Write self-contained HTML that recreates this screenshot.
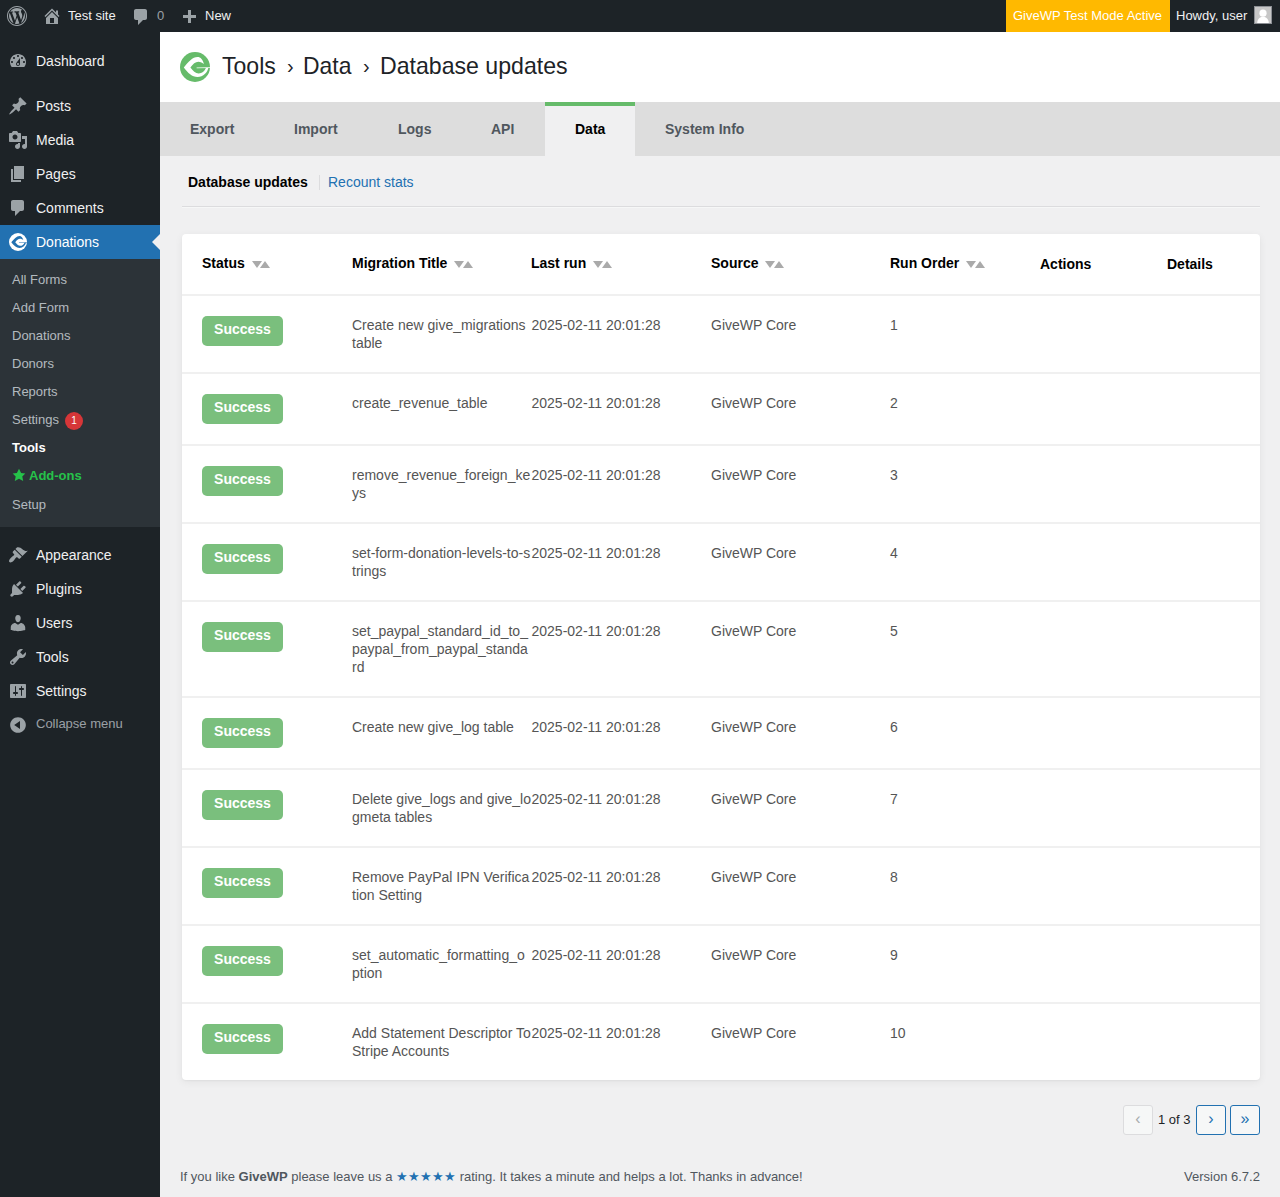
<!DOCTYPE html>
<html><head><meta charset="utf-8">
<style>
*{box-sizing:border-box;margin:0;padding:0}
html,body{width:1280px;height:1197px;overflow:hidden}
body{font-family:"Liberation Sans",sans-serif;background:#f0f0f1;color:#3c434a;font-size:13px;position:relative}
.a{position:absolute;white-space:nowrap}
#wpadminbar{position:absolute;left:0;top:0;width:1280px;height:32px;background:#1d2327;color:#f0f0f1;font-size:13px;line-height:15px}
#wpadminbar .t{position:absolute;top:8px;white-space:nowrap}
#wpadminbar svg{position:absolute;fill:rgba(240,246,252,.6)}
#adminmenu{position:absolute;left:0;top:32px;width:160px;height:1165px;background:#1d2327}
.mi{position:absolute;left:0;width:160px;height:34px;font-size:14px;line-height:16px;color:#f0f0f1}
.mi .tx{position:absolute;left:36px;top:9px;white-space:nowrap}
.mi svg{position:absolute;left:8px;top:7px;width:20px;height:20px;fill:rgba(240,246,252,.6)}
.mi.act{background:#2271b1;color:#fff}
.mi.coll{color:rgba(240,246,252,.6);font-size:13px;line-height:15px}
.mi.coll .tx{top:8px}
.arrow{position:absolute;right:0;top:9px;width:0;height:0;border:8px solid transparent;border-right-color:#f0f0f1}
.sub{position:absolute;left:0;top:227px;width:160px;height:268px;background:#2c3338}
.si{position:absolute;left:12px;font-size:13px;line-height:15px;color:rgba(240,246,252,.7);white-space:nowrap}
.si.cur{color:#fff;font-weight:bold}
.si.addons{color:#26c24a;font-weight:bold}
.si .star{position:absolute;left:-17.5px;top:0px;width:14px;height:14px;fill:#26c24a}
.bub{position:absolute;left:53px;top:0px;width:18px;height:18px;border-radius:9px;background:#d63638;color:#fff;font-size:10px;line-height:17px;text-align:center}
.hdr{position:absolute;left:160px;top:32px;width:1120px;height:70px;background:#fff}
.crumb{position:absolute;left:222px;top:52px;font-size:24px;line-height:27px;color:#1d2327;white-space:nowrap}
.crumb .sep{display:inline-block;margin:0 0px;font-size:24px}
.tabs{position:absolute;left:160px;top:102px;width:1120px;height:54px;background:#dddddd}
.tab{position:absolute;top:121px;font-size:14px;line-height:16px;font-weight:bold;color:#50575e;white-space:nowrap}
.tabact{position:absolute;left:545px;top:102px;width:90px;height:54px;background:#f0f0f1;border-top:4px solid #66bb6a}
.subnav{position:absolute;top:174px;font-size:14px;line-height:16px;white-space:nowrap}
.hr{position:absolute;left:182px;top:206px;width:1078px;height:2px;border-top:1px solid #dcdcde;border-bottom:1px solid #f6f7f7}
.card{position:absolute;left:182px;top:234px;width:1078px;height:846px;background:#fff;border-radius:4px;box-shadow:0 1px 2px rgba(0,0,0,.04),0 2px 8px rgba(0,0,0,.06)}
.th{position:absolute;font-size:14px;font-weight:bold;color:#000;line-height:16px;white-space:nowrap}
.srt{position:relative;display:inline-block;width:26px;height:10px;margin-left:0px}
.srt i{position:absolute;top:3px;width:0;height:0;border-left:5px solid transparent;border-right:5px solid transparent}
.srt i.dn{left:7px;border-top:7px solid #aaa}
.srt i.up{left:15.5px;border-bottom:7px solid #aaa}
.rb{position:absolute;left:182px;width:1078px;height:2px;background:#f0f0f0}
.td{position:absolute;font-size:14px;color:#555;line-height:18px;white-space:nowrap}
.badge{position:absolute;left:202px;width:81px;height:30px;border-radius:5px;background:#7abf7d;color:#fff;font-weight:bold;font-size:14px;line-height:16px;padding-top:5px;text-align:center}
.pg{position:absolute;top:1105px;width:30px;height:30px;border:1px solid #2271b1;border-radius:3px;background:#f6f7f7;color:#2271b1;font-size:16px;line-height:26px;text-align:center}
.pg.dis{border-color:#dcdcde;color:#a7aaad}
</style></head><body>
<div id="wpadminbar">
  <svg viewBox="0 0 20 20" style="left:7px;top:6px;width:20px;height:20px"><path fill-rule="evenodd" d="M20 10c0-5.52-4.48-10-10-10S0 4.48 0 10s4.48 10 10 10 10-4.48 10-10zM10 1.01c4.97 0 8.99 4.02 8.99 8.99s-4.02 8.99-8.99 8.99S1.01 14.97 1.01 10 5.03 1.01 10 1.01zM8.01 14.82L4.96 6.61c.49-.03 1.05-.08 1.05-.08.43-.05.38-1.01-.06-.99 0 0-1.29.1-2.13.1-.15 0-.33 0-.52-.01 1.44-2.17 3.9-3.6 6.7-3.6 2.09 0 3.99.79 5.41 2.09-.6-.08-1.45.35-1.45 1.42 0 .66.38 1.220.79 1.88.31.54.5 1.22.5 2.21 0 1.34-1.27 4.48-1.27 4.48l-2.71-7.5c.48-.03.75-.16.75-.16.43-.05.38-1.1-.05-1.08 0 0-1.3.11-2.14.11-.78 0-2.11-.11-2.11-.11-.43-.02-.48 1.06-.05 1.08l.84.08 1.12 3.04zm6.02 2.15L16.64 10s.67-1.69.39-3.81c.63 1.14.94 2.42.94 3.81 0 2.96-1.56 5.58-3.94 6.97zM2.68 6.77L6.5 17.25c-2.67-1.3-4.47-4.08-4.47-7.25 0-1.16.2-2.230.65-3.23zm7.45 4.53l2.29 6.25c-.75.27-1.57.42-2.42.42-.72 0-1.41-.11-2.06-.3z"/></svg>
  <svg viewBox="0 0 20 20" style="left:42px;top:6px;width:20px;height:20px"><path fill-rule="evenodd" d="M16 8.5l1.53 1.53-1.06 1.06L10 4.62l-6.47 6.47-1.06-1.06L10 2.5l4 4v-2h2v4zm-6-2.46l6 5.99V18H4v-5.97zM12 17v-5H8v5h4z"/></svg>
  <div class="t" style="left:68px">Test site</div>
  <svg viewBox="0 0 20 20" style="left:131px;top:7px;width:20px;height:20px"><path d="M5 2h9c1.1 0 2 .9 2 2v7c0 1.1-.9 2-2 2h-2l-5 5v-5H5c-1.1 0-2-.9-2-2V4c0-1.1.9-2 2-2z"/></svg>
  <div class="t" style="left:157px;color:rgba(240,246,252,.6)">0</div>
  <svg viewBox="0 0 20 20" style="left:179px;top:8px;width:20px;height:20px"><path d="M17 7v3h-5v5H9v-5H4V7h5V2h3v5h5z"/></svg>
  <div class="t" style="left:205px">New</div>
  <div style="position:absolute;left:1006px;top:0;width:164px;height:32px;background:#ffb900"></div>
  <div class="t" style="left:1013px;color:#fff">GiveWP Test Mode Active</div>
  <div class="t" style="left:1176px">Howdy, user</div>
  <div style="position:absolute;left:1254px;top:6px;width:18px;height:18px;border:1px solid #8c8f94;background:#c7c7c7;overflow:hidden">
    <svg viewBox="0 0 16 16" style="position:absolute;left:0;top:0;width:16px;height:16px;fill:#fff"><circle cx="8" cy="6.2" r="3.6"/><path d="M2.2 16c0-3.6 2.6-6.2 5.8-6.2s5.8 2.6 5.8 6.2z"/></svg>
  </div>
</div>
<div id="adminmenu">
<div class="mi" style="top:12px"><svg viewBox="0 0 20 20"><path fill-rule="evenodd" d="M3.76 16h12.48c1.1-1.37 1.76-3.11 1.76-5 0-4.42-3.58-8-8-8s-8 3.58-8 8c0 1.89.66 3.63 1.76 5zM10 4c.55 0 1 .45 1 1s-.45 1-1 1-1-.45-1-1 .45-1 1-1zM6 6c.55 0 1 .45 1 1s-.45 1-1 1-1-.45-1-1 .45-1 1-1zm8 0c.55 0 1 .45 1 1s-.45 1-1 1-1-.45-1-1 .45-1 1-1zm-5.37 5.55L12 7v6c0 1.1-.9 2-2 2s-2-.9-2-2c0-.57.24-1.08.63-1.45zM4 10c.55 0 1 .45 1 1s-.45 1-1 1-1-.45-1-1 .45-1 1-1zm12 0c.55 0 1 .45 1 1s-.45 1-1 1-1-.45-1-1 .45-1 1-1zm-5 3c0-.55-.45-1-1-1s-1 .45-1 1 .45 1 1 1 1-.45 1-1z"/></svg><span class="tx">Dashboard</span></div>
<div class="mi" style="top:57px"><svg viewBox="0 0 20 20"><path d="M10.44 3.02l1.82-1.82 6.36 6.35-1.83 1.82c-1.05-.68-2.48-.57-3.41.36l-.75.75c-.92.93-1.04 2.35-.35 3.41l-1.83 1.82-2.41-2.41-2.8 2.79c-.42.42-3.38 2.71-3.8 2.29s1.86-3.39 2.28-3.81l2.79-2.79L4.1 9.36l1.83-1.82c1.05.69 2.48.57 3.4-.36l.75-.75c.93-.92 1.05-2.35.36-3.41z"/></svg><span class="tx">Posts</span></div>
<div class="mi" style="top:91px"><svg viewBox="0 0 20 20"><path fill-rule="evenodd" d="M13 11V4c0-.55-.45-1-1-1h-1.67L9 1H5L3.67 3H2c-.55 0-1 .45-1 1v7c0 .55.45 1 1 1h10c.55 0 1-.45 1-1zM7 4.5c1.38 0 2.5 1.120 2.5 2.5S8.380 9.5 7 9.5 4.5 8.38 4.5 7 5.62 4.5 7 4.5z"/><path d="M14 6h5v10.5c0 1.38-1.12 2.5-2.5 2.5S14 17.88 14 16.5s1.12-2.5 2.5-2.5c.17 0 .34.02.5.05V9h-3V6zm-4 8.05V13h2v3.5c0 1.38-1.12 2.5-2.5 2.5S7 17.88 7 16.5 8.12 14 9.5 14c.17 0 .34.02.5.05z"/></svg><span class="tx">Media</span></div>
<div class="mi" style="top:125px"><svg viewBox="0 0 20 20"><path d="M6 15V2h10v13H6zm-1 1h8v2H3V5h2v11z"/></svg><span class="tx">Pages</span></div>
<div class="mi" style="top:159px"><svg viewBox="0 0 20 20"><path d="M5 2h9c1.1 0 2 .9 2 2v7c0 1.1-.9 2-2 2h-2l-5 5v-5H5c-1.1 0-2-.9-2-2V4c0-1.1.9-2 2-2z"/></svg><span class="tx">Comments</span></div>
<div class="mi act" style="top:193px"><svg viewBox="0 0 30 30" style="left:9px;top:8px;width:18px;height:18px"><circle cx="15" cy="15" r="15" fill="#fff"/><g fill="#2271b1"><path d="M23.9 12C23 7.6 20.6 4.9 17.5 4.9C12.6 4.9 8.2 9.8 3.8 15.4C8 21 12 24.9 17.5 24.9C23.4 24.9 27.5 20.2 28.3 15.9L25.9 16.1C24.6 19.6 21.6 21.5 18.6 21.4C15.6 21.3 12.8 18.6 10.4 15.4C12.8 12.1 15.5 9.7 18.3 9.7C20.6 9.7 22.5 10.8 23.9 12Z"/><path d="M16.6 15.6L30.5 15.2L30.5 16.1L16.6 16.3Z"/></g></svg><span class="tx">Donations</span><div class="arrow"></div></div>
<div class="sub"><div class="si" style="top:13px">All Forms</div><div class="si" style="top:41px">Add Form</div><div class="si" style="top:69px">Donations</div><div class="si" style="top:97px">Donors</div><div class="si" style="top:125px">Reports</div><div class="si" style="top:153px">Settings<span class="bub">1</span></div><div class="si cur" style="top:181px">Tools</div><div class="si addons" style="top:209px;left:29px"><svg class="star" viewBox="0 0 20 20"><path d="M10 1l3 6 6 .75-4.3 4.5L16 18.5 10 15.25 4 18.5l1.3-6.25L1 7.75 7 7z"/></svg>Add-ons</div><div class="si" style="top:238px">Setup</div></div>
<div class="mi" style="top:506px"><svg viewBox="0 0 20 20"><path d="M14.48 11.06L7.41 3.99l1.5-1.5c.5-.56 2.3-.47 3.51.32 1.21.8 1.43 1.28 2.91 2.1 1.18.64 2.45 1.26 4.45.85zm-.71.71L6.7 4.7 4.93 6.47c-.39.39-.39 1.02 0 1.41l1.06 1.06c.39.39.39 1.03 0 1.42-.6.6-1.43 1.11-2.21 1.69-.35.26-.7.53-1.01.84C1.43 14.23.4 16.08 1.4 17.07c.99 1 2.84-.03 4.180-1.36.31-.31.58-.66.85-1.020.57-.78 1.08-1.61 1.69-2.21.39-.39 1.02-.39 1.41 0l1.06 1.06c.39.39 1.02.39 1.41 0z"/></svg><span class="tx">Appearance</span></div>
<div class="mi" style="top:540px"><svg viewBox="0 0 20 20"><path d="M13.11 4.36L9.87 7.6 8 5.73l3.24-3.24c.35-.34 1.05-.2 1.56.32.52.51.66 1.21.31 1.55zm-8 1.77l.91-1.12 9.01 9.01-1.19.84c-.71.71-2.63 1.16-3.82 1.16H6.14L4.9 17.26c-.59.59-1.54.59-2.12 0-.59-.58-.59-1.53 0-2.12l1.24-1.24v-3.88c0-1.13.4-3.19 1.090-3.89zm7.26 3.97l3.24-3.24c.34-.35 1.04-.21 1.55.31.52.51.66 1.21.31 1.55l-3.24 3.25z"/></svg><span class="tx">Plugins</span></div>
<div class="mi" style="top:574px"><svg viewBox="0 0 20 20"><path d="M10 9.25c-2.27 0-2.73-3.44-2.73-3.44C7 4.02 7.82 2 9.97 2c2.16 0 2.98 2.02 2.71 3.81 0 0-.41 3.44-2.68 3.44zm0 2.57L12.72 10c2.39 0 4.52 2.33 4.52 4.53v2.49s-3.65 1.13-7.24 1.13c-3.65 0-7.24-1.13-7.24-1.13v-2.49c0-2.25 1.94-4.48 4.47-4.48z"/></svg><span class="tx">Users</span></div>
<div class="mi" style="top:608px"><svg viewBox="0 0 20 20"><path fill-rule="evenodd" d="M16.68 9.77c-1.34 1.34-3.3 1.67-4.95.99l-5.41 6.52c-.99.99-2.59.99-3.58 0s-.99-2.59 0-3.57l6.52-5.42c-.68-1.65-.35-3.61.99-4.95 1.28-1.28 3.12-1.62 4.72-1.06l-2.89 2.89 2.82 2.82 2.86-2.87c.53 1.58.18 3.39-1.08 4.65zM3.81 16.21c.4.39 1.04.39 1.43 0 .4-.4.4-1.04 0-1.430-.39-.4-1.03-.4-1.43 0-.39.39-.39 1.03 0 1.43z"/></svg><span class="tx">Tools</span></div>
<div class="mi" style="top:642px"><svg viewBox="0 0 20 20"><path fill-rule="evenodd" d="M18 16V4c0-.55-.45-1-1-1H3c-.55 0-1 .45-1 1v12c0 .55.45 1 1 1h14c.55 0 1-.45 1-1zM8 11h1c.55 0 1 .45 1 1s-.45 1-1 1H8v1.5c0 .28-.22.5-.5.5s-.5-.22-.5-.5V13H6c-.55 0-1-.45-1-1s.45-1 1-1h1V5.5c0-.28.22-.5.5-.5s.5.22.5.5V11zm5-2h-1c-.55 0-1-.45-1-1s.45-1 1-1h1V5.5c0-.28.22-.5.5-.5s.5.22.5.5V7h1c.55 0 1 .45 1 1s-.45 1-1 1h-1v5.5c0 .28-.22.5-.5.5s-.5-.22-.5-.5V9z"/></svg><span class="tx">Settings</span></div>
<div class="mi coll" style="top:676px"><svg viewBox="0 0 20 20"><path fill-rule="evenodd" d="M10 2.16c4.33 0 7.84 3.51 7.84 7.84s-3.51 7.84-7.84 7.84S2.16 14.33 2.16 10 5.71 2.16 10 2.16zm2 11.72V6.12L6.18 9.97z"/></svg><span class="tx">Collapse menu</span></div>
</div>
<div class="hdr"></div>
<svg viewBox="0 0 30 30" style="position:absolute;left:180px;top:52px;width:30px;height:30px;fill:#66bb6a"><circle cx="15" cy="15" r="15" fill="#66bb6a"/><g fill="#fff"><path d="M23.9 12C23 7.6 20.6 4.9 17.5 4.9C12.6 4.9 8.2 9.8 3.8 15.4C8 21 12 24.9 17.5 24.9C23.4 24.9 27.5 20.2 28.3 15.9L25.9 16.1C24.6 19.6 21.6 21.5 18.6 21.4C15.6 21.3 12.8 18.6 10.4 15.4C12.8 12.1 15.5 9.7 18.3 9.7C20.6 9.7 22.5 10.8 23.9 12Z"/><path d="M16.6 15.6L30.5 15.2L30.5 16.1L16.6 16.3Z"/></g></svg>
<div class="crumb" style="left:222px;transform:scaleX(.96);transform-origin:0 0">Tools</div>
<div class="crumb" style="left:287px;top:55px;font-size:20px;line-height:23px">›</div>
<div class="crumb" style="left:303px;transform:scaleX(.955);transform-origin:0 0">Data</div>
<div class="crumb" style="left:363px;top:55px;font-size:20px;line-height:23px">›</div>
<div class="crumb" style="left:380px;transform:scaleX(.963);transform-origin:0 0">Database updates</div>
<div class="tabs"></div>
<div class="tabact"></div>
<div class="tab" style="left:190px">Export</div>
<div class="tab" style="left:294px">Import</div>
<div class="tab" style="left:398px">Logs</div>
<div class="tab" style="left:491px">API</div>
<div class="tab" style="left:575px;color:#000">Data</div>
<div class="tab" style="left:665px">System Info</div>
<div class="subnav" style="left:188px;font-weight:bold;color:#000">Database updates</div>
<div style="position:absolute;left:319px;top:175px;width:1px;height:15px;background:#dcdcde"></div>
<div class="subnav" style="left:328px;color:#2271b1">Recount stats</div>
<div class="hr"></div>
<div class="card"></div>
<div class="th" style="left:202px;top:255px">Status<span class=srt><i class=dn></i><i class=up></i></span></div>
<div class="th" style="left:352px;top:255px">Migration Title<span class=srt><i class=dn></i><i class=up></i></span></div>
<div class="th" style="left:531px;top:255px">Last run<span class=srt><i class=dn></i><i class=up></i></span></div>
<div class="th" style="left:711px;top:255px">Source<span class=srt><i class=dn></i><i class=up></i></span></div>
<div class="th" style="left:890px;top:255px">Run Order<span class=srt><i class=dn></i><i class=up></i></span></div>
<div class="th" style="left:1040px;top:256px">Actions</div>
<div class="th" style="left:1167px;top:256px">Details</div>
<div class="rb" style="top:294px"></div>
<div class="badge" style="top:316px">Success</div>
<div class="td" style="left:352px;top:316px">Create new give_migrations<br>table</div>
<div class="td" style="left:531.5px;top:316px">2025-02-11 20:01:28</div>
<div class="td" style="left:711px;top:316px">GiveWP Core</div>
<div class="td" style="left:890px;top:316px">1</div>
<div class="rb" style="top:372px"></div>
<div class="badge" style="top:394px">Success</div>
<div class="td" style="left:352px;top:394px">create_revenue_table</div>
<div class="td" style="left:531.5px;top:394px">2025-02-11 20:01:28</div>
<div class="td" style="left:711px;top:394px">GiveWP Core</div>
<div class="td" style="left:890px;top:394px">2</div>
<div class="rb" style="top:444px"></div>
<div class="badge" style="top:466px">Success</div>
<div class="td" style="left:352px;top:466px">remove_revenue_foreign_ke<br>ys</div>
<div class="td" style="left:531.5px;top:466px">2025-02-11 20:01:28</div>
<div class="td" style="left:711px;top:466px">GiveWP Core</div>
<div class="td" style="left:890px;top:466px">3</div>
<div class="rb" style="top:522px"></div>
<div class="badge" style="top:544px">Success</div>
<div class="td" style="left:352px;top:544px">set-form-donation-levels-to-s<br>trings</div>
<div class="td" style="left:531.5px;top:544px">2025-02-11 20:01:28</div>
<div class="td" style="left:711px;top:544px">GiveWP Core</div>
<div class="td" style="left:890px;top:544px">4</div>
<div class="rb" style="top:600px"></div>
<div class="badge" style="top:622px">Success</div>
<div class="td" style="left:352px;top:622px">set_paypal_standard_id_to_<br>paypal_from_paypal_standa<br>rd</div>
<div class="td" style="left:531.5px;top:622px">2025-02-11 20:01:28</div>
<div class="td" style="left:711px;top:622px">GiveWP Core</div>
<div class="td" style="left:890px;top:622px">5</div>
<div class="rb" style="top:696px"></div>
<div class="badge" style="top:718px">Success</div>
<div class="td" style="left:352px;top:718px">Create new give_log table</div>
<div class="td" style="left:531.5px;top:718px">2025-02-11 20:01:28</div>
<div class="td" style="left:711px;top:718px">GiveWP Core</div>
<div class="td" style="left:890px;top:718px">6</div>
<div class="rb" style="top:768px"></div>
<div class="badge" style="top:790px">Success</div>
<div class="td" style="left:352px;top:790px">Delete give_logs and give_lo<br>gmeta tables</div>
<div class="td" style="left:531.5px;top:790px">2025-02-11 20:01:28</div>
<div class="td" style="left:711px;top:790px">GiveWP Core</div>
<div class="td" style="left:890px;top:790px">7</div>
<div class="rb" style="top:846px"></div>
<div class="badge" style="top:868px">Success</div>
<div class="td" style="left:352px;top:868px">Remove PayPal IPN Verifica<br>tion Setting</div>
<div class="td" style="left:531.5px;top:868px">2025-02-11 20:01:28</div>
<div class="td" style="left:711px;top:868px">GiveWP Core</div>
<div class="td" style="left:890px;top:868px">8</div>
<div class="rb" style="top:924px"></div>
<div class="badge" style="top:946px">Success</div>
<div class="td" style="left:352px;top:946px">set_automatic_formatting_o<br>ption</div>
<div class="td" style="left:531.5px;top:946px">2025-02-11 20:01:28</div>
<div class="td" style="left:711px;top:946px">GiveWP Core</div>
<div class="td" style="left:890px;top:946px">9</div>
<div class="rb" style="top:1002px"></div>
<div class="badge" style="top:1024px">Success</div>
<div class="td" style="left:352px;top:1024px">Add Statement Descriptor To<br>Stripe Accounts</div>
<div class="td" style="left:531.5px;top:1024px">2025-02-11 20:01:28</div>
<div class="td" style="left:711px;top:1024px">GiveWP Core</div>
<div class="td" style="left:890px;top:1024px">10</div>
<div class="pg dis" style="left:1123px">‹</div>
<div class="a" style="left:1158px;top:1112px;font-size:13px;line-height:15px;color:#1d2327">1 of 3</div>
<div class="pg" style="left:1196px">›</div>
<div class="pg" style="left:1230px">»</div>
<div class="a" style="left:180px;top:1169px;font-size:13px;line-height:15px;color:#50575e">If you like <b>GiveWP</b> please leave us a <span style="color:#2271b1">★★★★★</span> rating. It takes a minute and helps a lot. Thanks in advance!</div>
<div class="a" style="left:1184px;top:1169px;font-size:13px;line-height:15px;color:#50575e">Version 6.7.2</div>
</body></html>
